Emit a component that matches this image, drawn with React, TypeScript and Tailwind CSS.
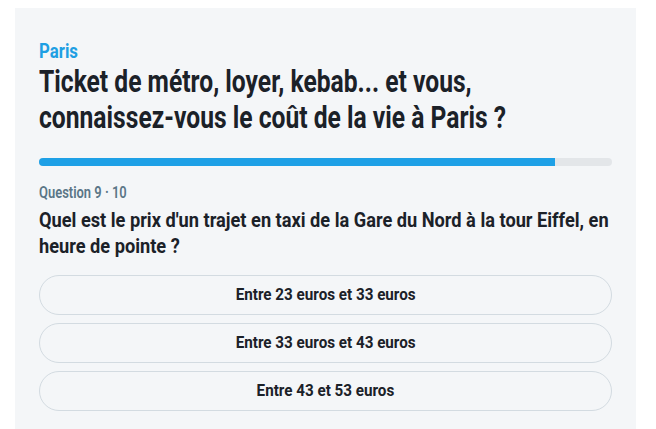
import type { ReactNode } from 'react';

const ANSWERS = [
  'Entre 23 euros et 33 euros',
  'Entre 33 euros et 43 euros',
  'Entre 43 et 53 euros',
];

// Roboto squeezed horizontally to look like the condensed headline face.
// Width is widened by the same factor so lines wrap at the card's edge.
function Narrow({ children, className = '' }: { children: ReactNode; className?: string }) {
  return <div className={`origin-left ${className}`}>{children}</div>;
}

export default function App() {
  return (
    <div className="min-h-[429px] bg-white pt-2 font-['Roboto',sans-serif]">
      <div className="ml-[15px] w-[621px] overflow-hidden bg-[#f4f6f8] px-6 pt-[31px] pb-[19px]">
        <Narrow className="w-[calc(100%/0.8)] scale-x-[0.8] text-[21px] leading-6 font-bold text-[#1e9fe3]">
          Paris
        </Narrow>
        <Narrow className="w-[calc(100%/0.77)] scale-x-[0.77] text-[32px] leading-9 font-bold text-[#1b2128]">
          Ticket de métro, loyer, kebab... et vous, connaissez-vous le coût de la vie à Paris ?
        </Narrow>

        <div className="mt-[23px] h-2 overflow-hidden rounded-full bg-[#e3e6e9]">
          <div className="h-full w-[90%] bg-[#1ea0e6]" />
        </div>

        <Narrow className="mt-[17px] w-[calc(100%/0.81)] scale-x-[0.81] text-base leading-5 font-semibold text-[#5b7687]">
          Question 9 · 10
        </Narrow>
        <Narrow className="mt-1 w-[calc(100%/0.91)] scale-x-[0.91] text-[20px] leading-[26px] font-bold text-[#1b2128]">
          Quel est le prix d'un trajet en taxi de la Gare du Nord à la tour Eiffel, en heure de pointe ?
        </Narrow>

        <div className="mt-4 flex flex-col gap-2">
          {ANSWERS.map((a) => (
            <button
              key={a}
              className="flex h-10 items-center justify-center rounded-full border border-[#d3dbe1] bg-[#f4f6f8]"
            >
              <span className="inline-block scale-x-[0.95] text-base font-bold text-[#1b2128]">{a}</span>
            </button>
          ))}
        </div>
      </div>
    </div>
  );
}
